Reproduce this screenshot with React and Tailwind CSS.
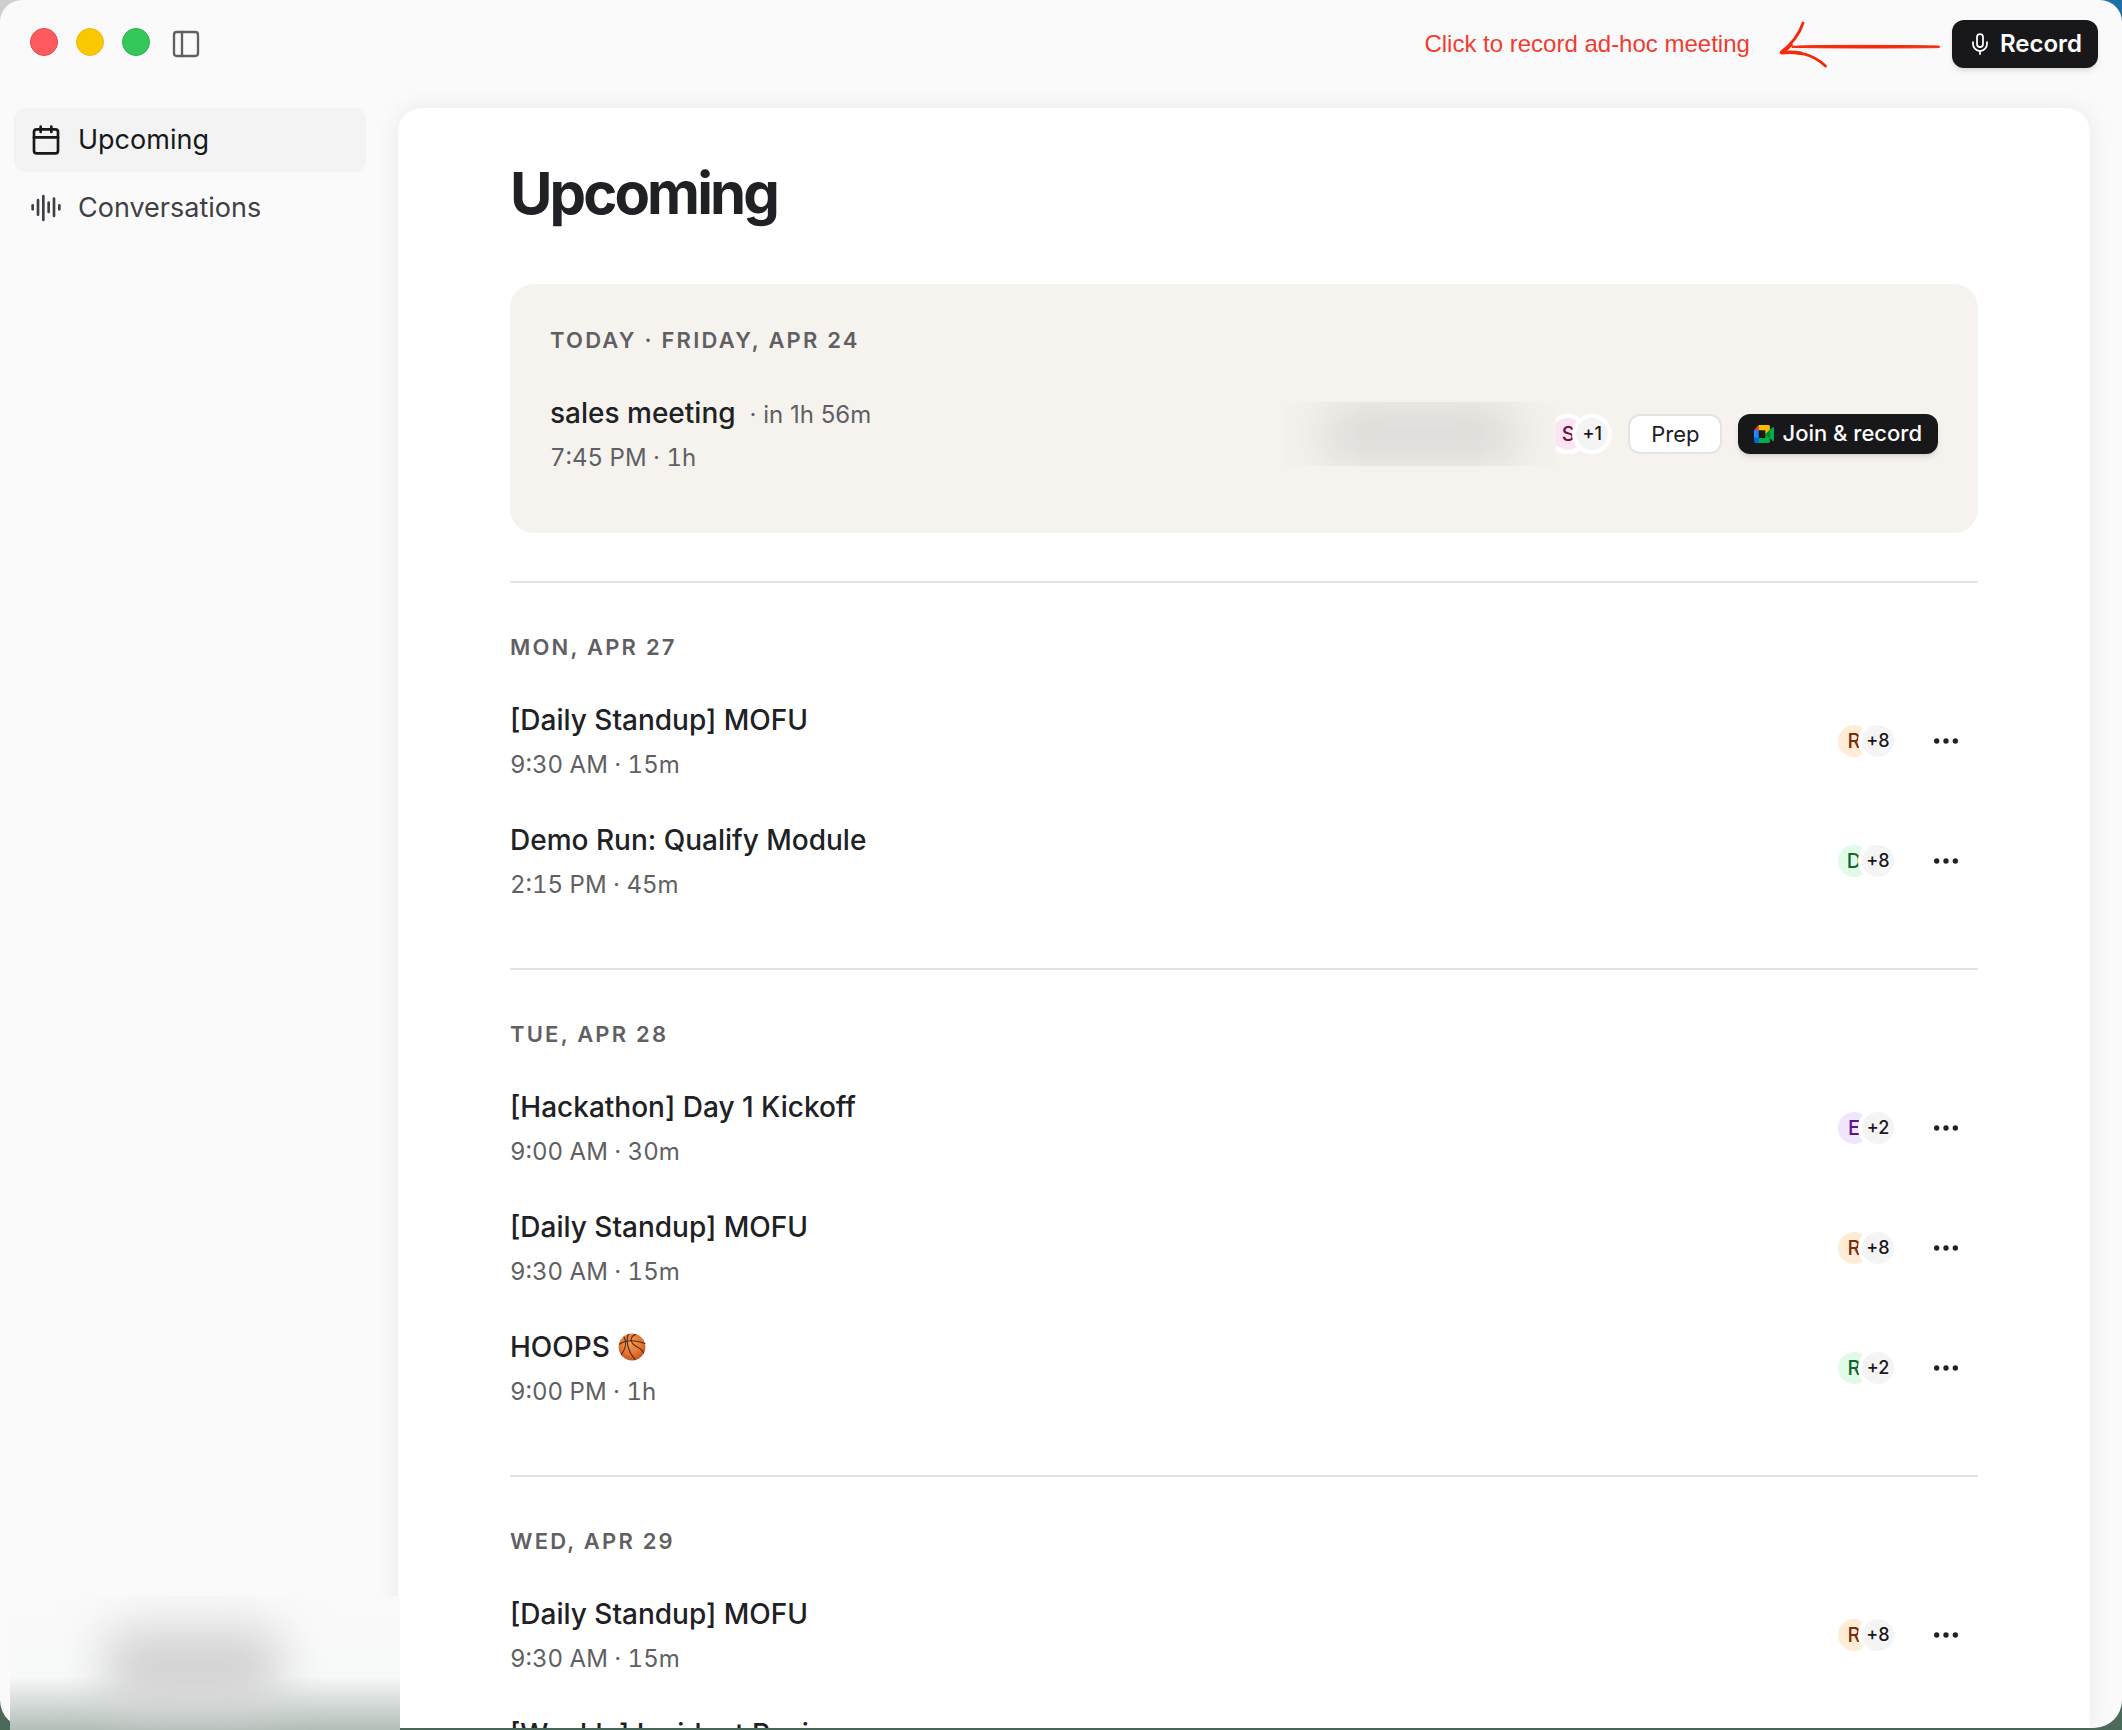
import React, { useState } from 'react';
import { AudioLines, Calendar, Ellipsis, Mic, PanelLeft } from 'lucide-react';

const NAV_ITEMS = [
  { id: 'upcoming', label: 'Upcoming', icon: Calendar },
  { id: 'conversations', label: 'Conversations', icon: AudioLines },
];

const DAYS = [
  {
    label: 'Mon, Apr 27',
    meetings: [
      { title: '[Daily Standup] MOFU', time: '9:30 AM · 15m', initial: 'R', tone: 'orange', more: 8 },
      { title: 'Demo Run: Qualify Module', time: '2:15 PM · 45m', initial: 'D', tone: 'green', more: 8 },
    ],
  },
  {
    label: 'Tue, Apr 28',
    meetings: [
      { title: '[Hackathon] Day 1 Kickoff', time: '9:00 AM · 30m', initial: 'E', tone: 'purple', more: 2 },
      { title: '[Daily Standup] MOFU', time: '9:30 AM · 15m', initial: 'R', tone: 'orange', more: 8 },
      { title: 'HOOPS', ball: true, time: '9:00 PM · 1h', initial: 'R', tone: 'green', more: 2 },
    ],
  },
  {
    label: 'Wed, Apr 29',
    meetings: [
      { title: '[Daily Standup] MOFU', time: '9:30 AM · 15m', initial: 'R', tone: 'orange', more: 8 },
      { title: '[Weekly] Incident Review', time: '10:00 AM · 30m', initial: 'R', tone: 'orange', more: 8 },
    ],
  },
];

const TONES = {
  orange: 'bg-[#ffecd6] text-[#7e2a0c]',
  green: 'bg-[#e0fbe8] text-[#0d6630]',
  purple: 'bg-[#f1e6fe] text-[#59168b]',
  pink: 'bg-[#fce4f4] text-[#6d0f3f]',
};

const MeetLogo = () => (
  <svg viewBox="0 0 87.5 72" preserveAspectRatio="none" className="h-[18px] w-5" aria-hidden="true">
    <path fill="#00832d" d="M49.5 36l8.53 9.75 11.47 7.33 2-17.02-2-16.64-11.69 6.44z" />
    <path fill="#0066da" d="M0 51.5V66c0 3.315 2.685 6 6 6h14.5l3-10.96-3-9.54-9.95-3z" />
    <path fill="#e94235" d="M20.5 0L0 20.5l10.55 3 9.95-3 2.95-9.41z" />
    <path fill="#2684fc" d="M20.5 20.5H0v31h20.5z" />
    <path
      fill="#00ac47"
      d="M82.6 8.68L69.5 19.42v33.66l13.16 10.79c1.97 1.54 4.85.135 4.85-2.37V11c0-2.535-2.945-3.925-4.91-2.32zM49.5 36v15.5h-29V72h43c3.315 0 6-2.685 6-6V53.08z"
    />
    <path fill="#ffba00" d="M63.5 0h-43v20.5h29V36l20-16.57V6c0-3.315-2.685-6-6-6z" />
  </svg>
);

const Basketball = () => (
  <svg viewBox="0 0 28 28" className="h-7 w-7" role="img" aria-label="basketball">
    <defs>
      <radialGradient id="ball" cx="0.45" cy="0.35" r="0.7">
        <stop offset="0" stopColor="#f79a56" />
        <stop offset="0.6" stopColor="#e5742f" />
        <stop offset="1" stopColor="#b9501c" />
      </radialGradient>
    </defs>
    <circle cx="14" cy="14" r="13.4" fill="url(#ball)" />
    <g fill="none" stroke="#4a2a1c" strokeWidth="1.1" strokeLinecap="round">
      <path d="M1.4 11.2C7 7.2 17 6.4 26.8 10.6" />
      <path d="M10.4 1.4C7.8 6.5 9.2 18 17.2 26.6" />
      <path d="M17.6 1.4C12.6 3 12 7.4 14.6 10.6C17.6 14.4 23.6 14.4 25.6 20" />
      <path d="M6 4C9 9 7.4 16 3.4 21.6" />
    </g>
  </svg>
);

const HandArrow = () => (
  <svg viewBox="0 0 164 48" className="h-12 w-[164px]" fill="#f5290b" stroke="#f5290b" aria-hidden="true">
    <path strokeWidth="1" d="M14 26.2C50 25 110 25.2 160 26C162.6 26.3 162.6 27.2 160 27.6C110 28.3 50 28 14 27.4Z" />
    <path fill="none" strokeWidth="2.8" strokeLinecap="round" strokeLinejoin="round" d="M25 3C21.5 14 15 23 3 32.5C20 31.5 34 33.5 47.5 46" />
    <path fill="none" strokeWidth="3.6" strokeLinecap="round" d="M13 24.5C10 28 6.5 30.5 3 32.8C10 32 17 32 23 33.2" />
  </svg>
);

const Attendees = ({ initial, tone, more }) => (
  <div className="flex items-center">
    <span
      className={`flex h-10 w-10 items-center justify-center rounded-full border-4 border-white text-[20px] font-medium ${TONES[tone]}`}
    >
      {initial}
    </span>
    <span className="z-10 -ml-4 flex h-10 w-10 items-center justify-center rounded-full border-4 border-white bg-[#f4f4f5] text-[18px] font-medium text-[#18181b]">
      +{more}
    </span>
  </div>
);

const DayLabel = ({ children }) => (
  <h2 className="mb-4 text-[22px] leading-[33px] font-semibold tracking-widest text-[#5f5f64] uppercase">{children}</h2>
);

const MeetingRow = ({ meeting, startsIn, children }) => (
  <li className="flex items-center justify-between pt-5 pb-[19px]">
    <div className="flex flex-col gap-[9px]">
      <div className="flex items-baseline gap-[14px]">
        <h3 className="flex items-center gap-2 text-[28px] leading-10 font-medium text-[#202124]">
          {meeting.title}
          {meeting.ball && <Basketball />}
        </h3>
        {startsIn && <span className="text-2xl text-[#5f5f64]">· {startsIn}</span>}
      </div>
      <p className="text-2xl text-[#5f5f64] tabular-nums">{meeting.time}</p>
    </div>
    <div className="flex items-center gap-4">{children}</div>
  </li>
);

const App = () => {
  const [active, setActive] = useState('upcoming');

  return (
    <div className="h-screen overflow-hidden bg-[linear-gradient(to_top,#4b6a5a_2%,transparent_10%),linear-gradient(to_right,#cfcfcf,#1f6ea6)] font-['Inter',sans-serif]">
      <div className="flex h-[calc(100vh-2px)] flex-col rounded-t-[22px] rounded-b-[28px] bg-[#fafafa]">
        {/* Title bar */}
        <header className="flex shrink-0 items-start justify-between pt-5 pr-6 pl-[30px]">
          <div className="flex items-start gap-5 pt-2">
            <div className="flex gap-[18px]">
              <button aria-label="Close" className="h-7 w-7 rounded-full border border-[#e8404a] bg-[#ff5b5f]" />
              <button aria-label="Minimize" className="h-7 w-7 rounded-full border border-[#f0bc00] bg-[#fac800]" />
              <button aria-label="Zoom" className="h-7 w-7 rounded-full border border-[#1fb14a] bg-[#35c759]" />
            </div>
            <button aria-label="Toggle sidebar" className="text-[#5f5f64]">
              <PanelLeft size={32} strokeWidth={1.75} />
            </button>
          </div>
          <div className="flex items-center">
            <span className="mr-7 font-['Liberation_Sans',sans-serif] text-2xl text-[#f23b30]">
              Click to record ad-hoc meeting
            </span>
            <HandArrow />
            <button className="ml-[10px] flex h-12 items-center gap-2 rounded-xl bg-[#18181b] px-4 text-2xl font-semibold text-white shadow-md">
              <Mic size={24} strokeWidth={1.75} />
              Record
            </button>
          </div>
        </header>

        <div className="flex min-h-0 flex-1 pt-10 pr-8">
          {/* Sidebar */}
          <aside className="flex w-[398px] shrink-0 flex-col">
            <nav className="flex flex-col gap-1 pr-8 pl-[14px]">
              {NAV_ITEMS.map(({ id, label, icon: Icon }) => (
                <button
                  key={id}
                  onClick={() => setActive(id)}
                  className={`flex h-16 items-center gap-4 rounded-xl px-4 text-[27px] ${
                    active === id ? 'bg-[#f3f3f3] text-[#18181b]' : 'text-[#3f3f46]'
                  }`}
                >
                  <Icon size={32} strokeWidth={2} />
                  {label}
                </button>
              ))}
            </nav>
            {/* Obscured account panel */}
            <div className="relative z-10 mt-auto -mr-0.5 -mb-0.5 ml-[10px] h-[134px] overflow-hidden bg-linear-to-b from-[#fafafa] via-[#f8f9f9] via-60% to-[#b3beb8]">
              <div className="mx-auto mt-8 h-20 w-44 -translate-x-3 rounded-3xl bg-[#d2d2d2] blur-xl" />
            </div>
          </aside>

          {/* Main */}
          <main className="min-w-0 flex-1 overflow-hidden rounded-t-3xl bg-white px-28 pt-12 shadow-[0_0_24px_rgba(0,0,0,0.07)]">
            <h1 className="text-[58px] leading-[74px] font-bold tracking-tighter text-[#202124]">Upcoming</h1>

            <section className="mt-[54px] mb-12 rounded-3xl bg-[#f6f3ee] p-10">
              <DayLabel>Today · Friday, Apr 24</DayLabel>
              <ul>
                <MeetingRow meeting={{ title: 'sales meeting', time: '7:45 PM · 1h' }} startsIn="in 1h 56m">
                  <div className="relative z-10 -mr-6 h-16 w-[272px] overflow-hidden bg-[#f6f3ee]">
                    <div className="mx-auto h-16 w-48 bg-[#dcdad7] blur-xl" />
                  </div>
                  <Attendees initial="S" tone="pink" more={1} />
                  <button className="h-10 rounded-xl border-2 border-[#e4e4e7] bg-white px-[21px] text-[22px] leading-8 text-[#202124]">
                    Prep
                  </button>
                  <button className="flex h-10 items-center gap-2 rounded-xl bg-[#18181b] px-4 text-[22px] font-medium text-white shadow-md">
                    <MeetLogo />
                    Join &amp; record
                  </button>
                </MeetingRow>
              </ul>
            </section>

            {DAYS.map((day) => (
              <section key={day.label} className="border-t-2 border-[#e4e4e7] py-12">
                <DayLabel>{day.label}</DayLabel>
                <ul>
                  {day.meetings.map((meeting) => (
                    <MeetingRow key={meeting.title} meeting={meeting}>
                      <Attendees initial={meeting.initial} tone={meeting.tone} more={meeting.more} />
                      <button aria-label="More options" className="flex h-16 w-16 items-center justify-center text-[#202124]">
                        <Ellipsis size={32} />
                      </button>
                    </MeetingRow>
                  ))}
                </ul>
              </section>
            ))}
          </main>
        </div>
      </div>
    </div>
  );
};

export default App;
